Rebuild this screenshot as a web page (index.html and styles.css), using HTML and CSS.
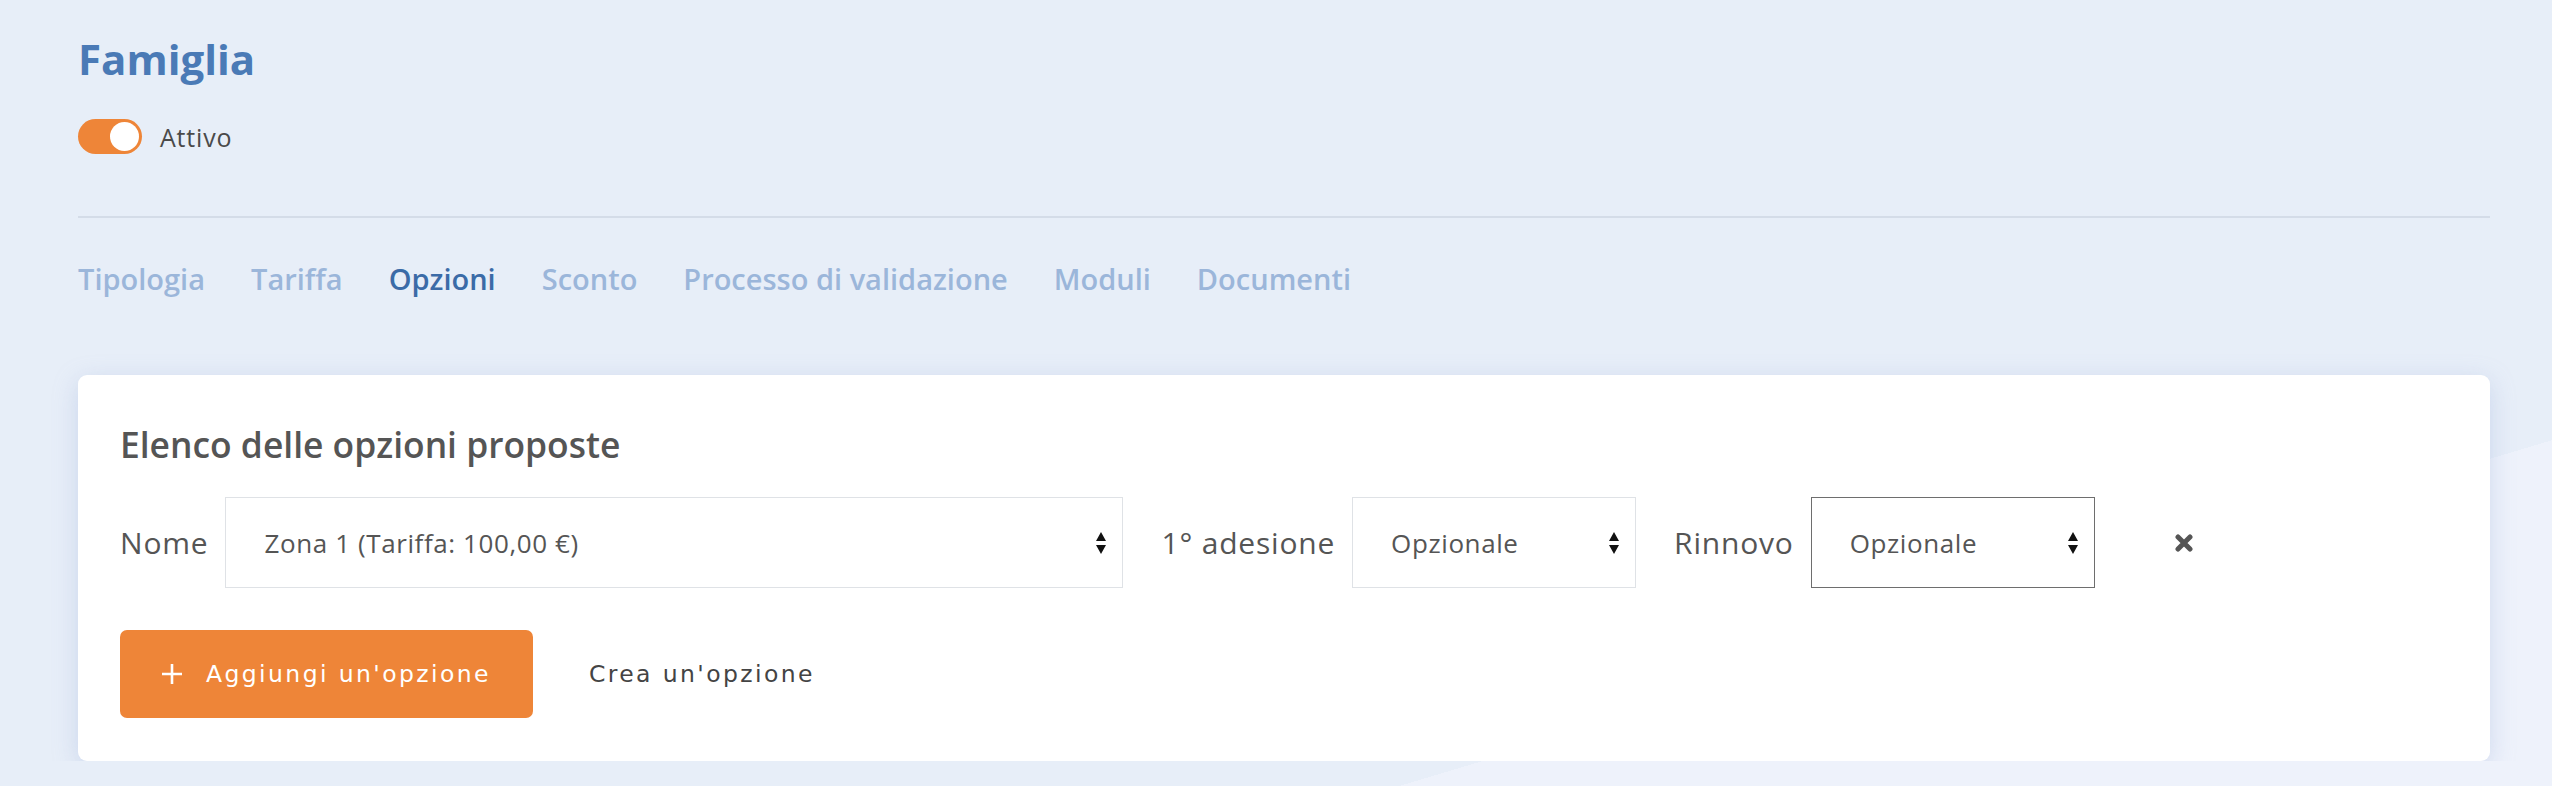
FILE: index.html
```html
<!DOCTYPE html>
<html lang="it">
<head>
  <meta charset="UTF-8" />
  <title>Famiglia – Opzioni</title>
  <link rel="stylesheet" href="styles.css">
</head>
<body>

<div class="page">
  <header class="head">
    <h1 class="title">Famiglia</h1>
    <div class="status">
      <span class="switch on"><span class="knob"></span></span>
      <span class="status-label">Attivo</span>
    </div>
  </header>

  <nav class="tabs">
    <a href="#">Tipologia</a>
    <a href="#">Tariffa</a>
    <a href="#" class="active">Opzioni</a>
    <a href="#">Sconto</a>
    <a href="#">Processo di validazione</a>
    <a href="#">Moduli</a>
    <a href="#">Documenti</a>
  </nav>

  <section class="card">
    <h2 class="card-title">Elenco delle opzioni proposte</h2>

    <div class="option-row">
      <span class="field-label">Nome</span>
      <div class="select select-name">
        <span>Zona 1 (Tariffa: 100,00 €)</span>
        <svg class="arrows" width="10" height="22" viewBox="0 0 10 22"><path d="M0 9L5 0L10 9Z M0 13L10 13L5 22Z" fill="#111"/></svg>
      </div>

      <span class="field-label">1° adesione</span>
      <div class="select select-small">
        <span>Opzionale</span>
        <svg class="arrows" width="10" height="22" viewBox="0 0 10 22"><path d="M0 9L5 0L10 9Z M0 13L10 13L5 22Z" fill="#111"/></svg>
      </div>

      <span class="field-label">Rinnovo</span>
      <div class="select select-small focused">
        <span>Opzionale</span>
        <svg class="arrows" width="10" height="22" viewBox="0 0 10 22"><path d="M0 9L5 0L10 9Z M0 13L10 13L5 22Z" fill="#111"/></svg>
      </div>

      <button class="remove" title="Rimuovi">
        <svg width="18" height="18" viewBox="0 0 18 18"><path d="M3 3L15 15M15 3L3 15" stroke="#555" stroke-width="5" stroke-linecap="round"/></svg>
      </button>
    </div>

    <div class="actions">
      <button class="btn-add">
        <svg width="22" height="22" viewBox="0 0 22 22"><path d="M11 1V21M1 11H21" stroke="#fff" stroke-width="2.6"/></svg>
        <span>Aggiungi un'opzione</span>
      </button>
      <a href="#" class="link-create">Crea un'opzione</a>
    </div>
  </section>
</div>

</body>
</html>
```

FILE: styles.css
```css
:root {
  --bg: #e7eef8;
  --bg-soft: #eef2fb;
  --blue: #4a7ab6;
  --blue-dark: #3b6ba7;
  --blue-light: #9bb6da;
  --orange: #ee8538;
  --text: #555;
  --line: #d4dce8;
}

html, body {
  min-height: 100%;
  margin: 0;
}

html {
  background: linear-gradient(163.3deg, var(--bg) 1155px, var(--bg-soft) 1155px);
  background-attachment: fixed;
}

body {
  font-family: 'Open Sans', sans-serif;
  color: var(--text);
}

.page {
  padding: 33px 62px 0 78px;
}

.title {
  margin: 0;
  font-size: 42px;
  line-height: 52px;
  font-weight: 700;
  color: var(--blue);
}

.status {
  display: flex;
  align-items: center;
  gap: 18px;
  margin-top: 34px;
}

.switch {
  width: 64px;
  height: 35px;
  border-radius: 18px;
  background: var(--orange);
  display: flex;
  align-items: center;
  justify-content: flex-end;
  padding: 0 3px;
  box-sizing: border-box;
}

.knob {
  width: 29px;
  height: 29px;
  border-radius: 50%;
  background: white;
}

.status-label {
  font-size: 25px;
  letter-spacing: 0.8px;
  color: #4a4a4a;
}

.tabs {
  display: flex;
  gap: 46px;
  margin-top: 62px;
  padding-top: 41px;
  border-top: 2px solid var(--line);
}

.tabs a {
  font-size: 29px;
  line-height: 40px;
  font-weight: 600;
  text-decoration: none;
  color: var(--blue-light);
}

.tabs a.active {
  color: var(--blue-dark);
}

.card {
  margin-top: 76px;
  background: white;
  border-radius: 9px;
  box-shadow: 0 6px 24px rgba(150, 170, 215, 0.35);
  padding: 47px 42px 43px;
}

.card-title {
  margin: 0 0 31px;
  font-size: 35.4px;
  line-height: 44px;
  font-weight: 600;
  color: var(--text);
}

.option-row {
  display: flex;
  align-items: center;
}

.field-label {
  font-size: 30px;
  letter-spacing: 0.8px;
  color: var(--text);
  margin-right: 17px;
}

.select {
  height: 91px;
  box-sizing: border-box;
  border: 1px solid #dfe2e6;
  display: flex;
  align-items: center;
  justify-content: space-between;
  padding: 0 16px 0 38px;
  margin-right: 38px;
  font-size: 26px;
  letter-spacing: 0.6px;
  color: #555;
}

.select-name {
  width: 898px;
}

.select-small {
  width: 284px;
}

.select.focused {
  border-color: #6e6e6e;
}

.remove {
  border: none;
  background: none;
  padding: 0;
  margin-left: 42px;
  display: flex;
  cursor: pointer;
}

.actions {
  display: flex;
  align-items: center;
  gap: 56px;
  margin-top: 42px;
}

.btn-add {
  height: 88px;
  display: flex;
  align-items: center;
  gap: 23px;
  padding: 0 42px 0 41px;
  border: none;
  border-radius: 7px;
  background: var(--orange);
  color: white;
  font-family: 'DejaVu Sans', sans-serif;
  font-size: 23.5px;
  letter-spacing: 2.4px;
  cursor: pointer;
}

.link-create {
  font-family: 'DejaVu Sans', sans-serif;
  font-size: 23.5px;
  letter-spacing: 2.4px;
  color: #444;
  text-decoration: none;
}
```
